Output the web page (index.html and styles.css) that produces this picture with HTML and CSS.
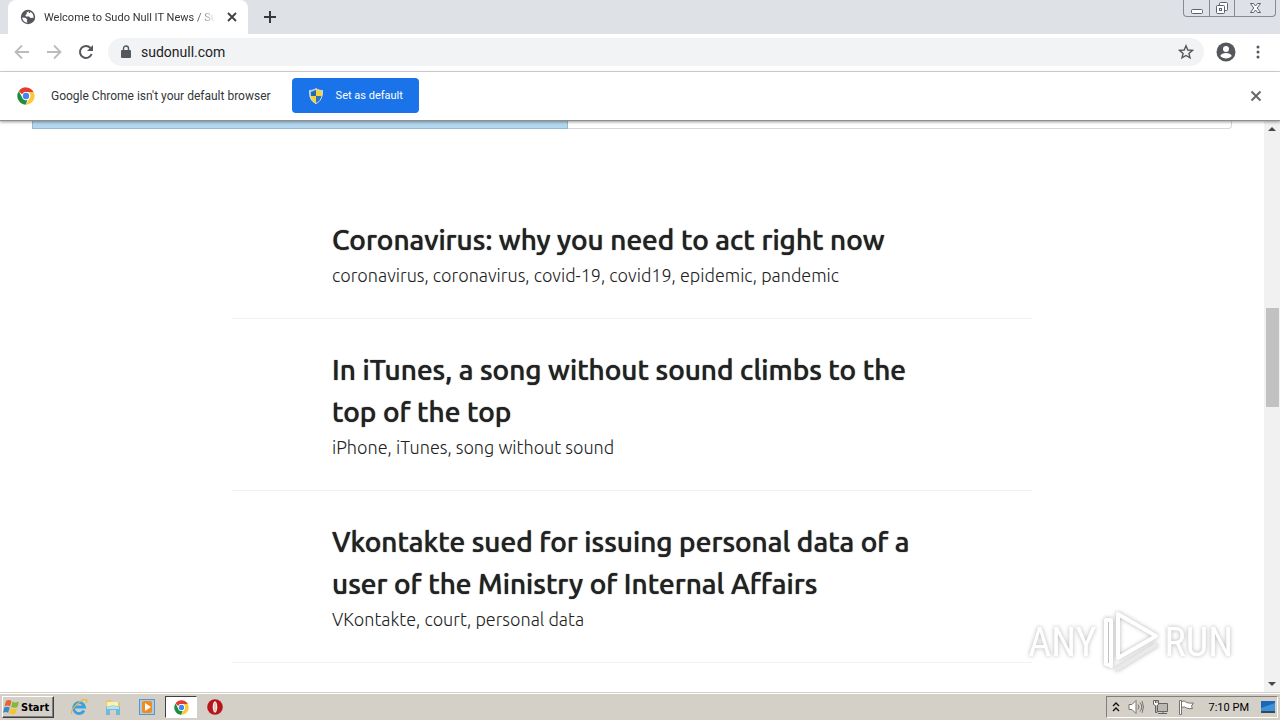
FILE: index.html
```html
<!DOCTYPE html>
<html lang="en">
<head>
    <meta charset="UTF-8">
    <meta name="viewport" content="width=device-width, initial-scale=1.0">
    <title>Welcome to Sudo Null IT News</title>
    <link rel="stylesheet" href="styles.css">
</head>
<body>
    <!-- Chrome logo, shared by the info bar and the taskbar -->
    <svg class="defs" width="0" height="0" aria-hidden="true">
        <symbol id="chrome" viewBox="0 0 48 48">
            <path fill="#e33b2e" d="M24 1a23 23 0 0 1 20 12H24a11 11 0 0 0-10 7L5 11A23 23 0 0 1 24 1z"/>
            <path fill="#fcc934" d="M44 13a23 23 0 0 1-21 34l11-18a11 11 0 0 0-2-14l-2-2z"/>
            <path fill="#1e8e3e" d="M5 11l9.500 18.500A11 11 0 0 0 28 34l-5 13A23 23 0 0 1 5 11z"/>
            <circle cx="24" cy="24" r="11" fill="#fff"/>
            <circle cx="24" cy="24" r="8.500" fill="#4285f4"/>
        </symbol>
    </svg>

    <header class="tab-strip">
        <div class="tab">
            <svg width="16" height="16" viewBox="0 0 16 16">
                <circle cx="8" cy="8" r="7.200" fill="#54575b"/>
                <path fill="#fff" d="M2.200 8.500l3 .2 2 1.600-.4 1.600.9 1.800C4.500 13.500 2.300 11 2.200 8.500zM8.500 2.300l-2 1.400.4 1.400-1.600 1 .7 1.300h3l1.600 1.600 3-.2c.3-3-1.600-5.500-4-6.300l.6 1.300-1.300.4z"/>
            </svg>
            <span class="tab-title">Welcome to Sudo Null IT News / Sud</span>
            <button class="icon-btn" aria-label="Close tab">
                <svg width="16" height="16" viewBox="0 0 16 16"><path d="M4 4l8 8M12 4l-8 8" stroke="#3c4043" stroke-width="1.800"/></svg>
            </button>
        </div>
        <button class="icon-btn new-tab" aria-label="New tab">
            <svg width="14" height="14" viewBox="0 0 14 14"><path d="M7 1v12M1 7h12" stroke="#35383c" stroke-width="2"/></svg>
        </button>
        <div class="window-controls">
            <button aria-label="Minimize"><svg width="12" height="14" viewBox="0 0 12 14"><rect x=".5" y="8.500" width="11" height="4" rx="1" fill="#fff" stroke="#5c6270"/></svg></button>
            <button aria-label="Restore"><svg width="14" height="14" viewBox="0 0 14 14" fill="#fff" stroke="#5c6270"><rect x="4.500" y="1.500" width="8" height="8" rx="1"/><rect x="1.500" y="4.500" width="8" height="8" rx="1"/><rect x="4.500" y="7.500" width="2" height="2"/></svg></button>
            <button class="close" aria-label="Close"><svg width="13" height="14" viewBox="0 0 13 14"><path d="M1.500 2.500h3l2 2.500 2-2.500h3L8.200 7l3.300 4.500h-3l-2-2.500-2 2.500h-3L4.800 7z" fill="#fff" stroke="#5c6270"/></svg></button>
        </div>
    </header>

    <nav class="toolbar">
        <button class="icon-btn" aria-label="Back"><svg width="16" height="16" viewBox="0 0 16 16"><path d="M15 8H2M8 1.500L1.500 8 8 14.500" fill="none" stroke="#b9bcbf" stroke-width="1.800"/></svg></button>
        <button class="icon-btn" aria-label="Forward"><svg width="16" height="16" viewBox="0 0 16 16"><path d="M1 8h13M8 1.500L14.500 8 8 14.500" fill="none" stroke="#b9bcbf" stroke-width="1.800"/></svg></button>
        <button class="icon-btn" aria-label="Reload"><svg width="16" height="16" viewBox="0 0 16 16"><path d="M13.600 10A6 6 0 1 1 12.500 4" fill="none" stroke="#54575b" stroke-width="2"/><path d="M15 1v6H9z" fill="#54575b"/></svg></button>
        <div class="address">
            <svg width="10" height="14" viewBox="0 0 10 14"><rect y="5" width="10" height="8" rx="1" fill="#54575b"/><path d="M2.500 6V3.500a2.500 2.500 0 0 1 5 0V6" fill="none" stroke="#54575b" stroke-width="1.400"/></svg>
            <input type="text" value="sudonull.com" aria-label="Address">
            <button class="icon-btn" aria-label="Bookmark this page"><svg width="16" height="16" viewBox="0 0 16 16"><path d="M8 1.800l1.800 4.200 4.600.4-3.500 3 1.100 4.500L8 11.500l-4 2.400 1.100-4.500-3.500-3L6.200 6z" fill="none" stroke="#54575b" stroke-width="1.400"/></svg></button>
        </div>
        <button class="icon-btn" aria-label="Profile"><svg width="20" height="20" viewBox="0 0 20 20"><circle cx="10" cy="10" r="9.500" fill="#54575b"/><circle cx="10" cy="7" r="3" fill="#fff"/><path d="M4.200 14c1.300-4 10.300-4 11.600 0-3 3.300-8.600 3.300-11.600 0z" fill="#fff"/></svg></button>
        <button class="icon-btn menu" aria-label="Menu"><svg width="4" height="16" viewBox="0 0 4 16" fill="#54575b"><circle cx="2" cy="3" r="1.500"/><circle cx="2" cy="8" r="1.500"/><circle cx="2" cy="13" r="1.500"/></svg></button>
    </nav>

    <div class="infobar">
        <svg width="18" height="18"><use href="#chrome"/></svg>
        <span>Google Chrome isn't your default browser</span>
        <button class="set-default">
            <svg width="16" height="16" viewBox="0 0 16 16">
                <path d="M8 .5C6 2 4 2.500 1.500 2.500 1.300 9 3.500 13.500 8 15.500z" fill="#8ccbf2"/>
                <path d="M8 .5c2 1.500 4 2 6.500 2C14.700 9 12.500 13.500 8 15.500z" fill="#f5d33c"/>
                <path d="M1.500 8H8v7.500C4 13.500 2 11 1.500 8z" fill="#f5d33c"/>
                <path d="M14.500 8H8v7.500c4-2 6-4.500 6.500-7.500z" fill="#2f74c4"/>
                <path d="M8 2v6H3V4z" fill="#2868ae"/>
                <path d="M8 .5c2 1.500 4 2 6.500 2C14.700 9 12.500 13.500 8 15.500 3.500 13.500 1.300 9 1.500 2.500 4 2.500 6 2 8 .5z" fill="none" stroke="#d5dfe6"/>
            </svg>
            Set as default
        </button>
        <button class="icon-btn dismiss" aria-label="Dismiss"><svg width="16" height="16" viewBox="0 0 16 16"><path d="M3.500 3.500l9 9M12.500 3.500l-9 9" stroke="#66696d" stroke-width="2"/></svg></button>
    </div>

    <div class="viewport">
        <main class="page">
            <div class="banner"><div class="banner-fill"></div></div>
            <article>
                <h2><a href="#">Coronavirus: why you need to act right now</a></h2>
                <p>coronavirus, coronavirus, covid-19, covid19, epidemic, pandemic</p>
            </article>
            <article>
                <h2><a href="#">In iTunes, a song without sound climbs to the top of the top</a></h2>
                <p>iPhone, iTunes, song without sound</p>
            </article>
            <article>
                <h2><a href="#">Vkontakte sued for issuing personal data of a user of the Ministry of Internal Affairs</a></h2>
                <p>VKontakte, court, personal data</p>
            </article>
        </main>
        <div class="scrollbar">
            <svg width="16" height="16" viewBox="0 0 16 16"><path d="M4 10l4-4 4 4z" fill="#484848"/></svg>
            <div class="track"><div class="thumb"></div></div>
            <svg width="16" height="16" viewBox="0 0 16 16"><path d="M4 6l4 4 4-4z" fill="#484848"/></svg>
        </div>
        <div class="watermark">
            <span>ANY</span>
            <svg width="60" height="64" viewBox="0 0 60 64" fill="none" stroke="#fff" stroke-width="4" stroke-linejoin="round" stroke-linecap="round">
                <path d="M17 4v42M17 4l38 22-38 22"/>
                <path d="M10 10H5v44l5 2V10"/>
                <path d="M16 59l39-24" stroke="#e9e9e9"/>
            </svg>
            <span>RUN</span>
        </div>
    </div>

    <footer class="taskbar">
        <button class="start">
            <svg width="17" height="16" viewBox="0 0 17 16">
                <path d="M3 2c2-1.300 4-1.200 5.500 0L7 7.500C5.500 6.300 3.500 6.300 1.500 7.300z" fill="#e8622c"/>
                <path d="M9.500 2.500C11 3.700 13 3.800 16 2.500L14.500 8c-2 1-4.500 1-6.300 0z" fill="#82b93c"/>
                <path d="M1.200 8.500c2-1 4-1 5.500 0L5.200 14C3.800 12.800 2 12.800 0 13.800z" fill="#3f86c8"/>
                <path d="M7.800 9c1.700 1.200 4 1.200 6.300.3L12.500 14.500c-2 1-4.500 1-6.200 0z" fill="#f6c42f"/>
            </svg>
            Start
        </button>
        <button class="task" aria-label="Internet Explorer"><svg width="18" height="18" viewBox="0 0 18 18" fill="none"><path d="M14 12.500A5.500 5.500 0 1 1 14.500 9H5" stroke="#3ba0df" stroke-width="2.800"/><path d="M2 16C-1 12 13-1 16.500 2c.8.800.3 2-.5 3" stroke="#e6b93d" stroke-width="1.200"/></svg></button>
        <button class="task" aria-label="Explorer"><svg width="18" height="18" viewBox="0 0 18 18"><path d="M2 2h5l1 2h8v8H2z" fill="#e8c765"/><path d="M3 4h11v6H3z" fill="#fbf0b5"/><path d="M2 9q7-3 14 0v8h-4v-5H6v5H2z" fill="#72b8da"/><path d="M3 9q6-2 12 0v2H3z" fill="#b9e1ee"/></svg></button>
        <button class="task" aria-label="Media Player"><svg width="18" height="18" viewBox="0 0 18 18"><rect x="1.500" y="1.500" width="15" height="15" fill="#a8cdea" stroke="#5a95c5"/><rect x="4" y="3" width="10" height="12" rx="2" fill="#f28a1c"/><path d="M7 5l6 4-6 4z" fill="#fff"/></svg></button>
        <button class="task active" aria-label="Google Chrome"><svg width="15" height="15"><use href="#chrome"/></svg></button>
        <button class="task" aria-label="Opera"><svg width="16" height="16" viewBox="0 0 16 16"><circle cx="8" cy="8" r="7.800" fill="#b5161b"/><ellipse cx="8" cy="8" rx="2.300" ry="5.800" fill="#f8e9e6"/><path d="M8 4v8" stroke="#d9a5a3"/></svg></button>
        <div class="tray">
            <svg width="8" height="12" viewBox="0 0 8 12" fill="none" stroke="#111" stroke-width="1.400"><path d="M1 5l3-3 3 3M1 10l3-3 3 3"/></svg>
            <svg width="16" height="16" viewBox="0 0 16 16" fill="#fff" stroke="#77746d"><path d="M1 5.500h3l4-4v13l-4-4H1z"/><path d="M10 5.500q2 2.500 0 5M12 3.500q3.500 4.500 0 9M14 2q3 6 0 12" fill="none"/></svg>
            <svg width="18" height="16" viewBox="0 0 18 16" fill="#fff" stroke="#66635d"><path d="M5.500 4.500h10v8h-10z" fill="#bab8b3"/><path d="M6 14.500h9M11 12v3"/><path d="M1.500 1.500h5v4l-1.500 1v7H3.500v-7l-2-1zM3.500 1v3M5 1v3"/></svg>
            <svg width="17" height="16" viewBox="0 0 17 16" fill="#fff" stroke="#77746d"><path d="M1.500 15.500v-14h2v14zM3.500 2.500q3-1.500 5 1 3 1 7 .5l-2 3 1 2.500q-4 .5-6-.5-2-2-5-.5z"/></svg>
            <time>7:10 PM</time>
            <svg width="16" height="14" viewBox="0 0 16 14"><path d="M1 1h14v10H1z" fill="#1967b8"/><path d="M1 8l14-5v8H1z" fill="#3f92d8"/><path d="M1 11h14v2H1z" fill="#35495c"/></svg>
        </div>
    </footer>
</body>
</html>
```
FILE: styles.css
```css
* {
    box-sizing: border-box;
}

body {
    margin: 0;
    height: 100vh;
    display: flex;
    flex-direction: column;
    overflow: hidden;
    background: #fff;
    color: #333639;
    font-family: Tahoma, Roboto, "Noto Sans", sans-serif;
    font-size: 12px;
}

svg {
    display: block;
    flex: none;
}

.defs {
    position: absolute;
}

button {
    font: inherit;
    color: inherit;
    padding: 0;
    border: 0;
    background: none;
}

.icon-btn {
    display: flex;
    flex: none;
}

/* Tab strip */
.tab-strip {
    display: flex;
    flex: none;
    height: 34px;
    padding: 0 4px 0 8px;
    background: #dee1e6;
}

.tab {
    display: flex;
    align-items: center;
    gap: 8px;
    width: 240px;
    padding: 0 8px 0 12px;
    border-radius: 8px 8px 0 0;
    background: #fff;
}

.tab-title {
    flex: 1;
    min-width: 0;
    white-space: nowrap;
    font-size: 11px;
    mask-image: linear-gradient(to right, #000 88%, transparent);
    mask-clip: no-clip;
}

.new-tab {
    align-items: center;
    margin-left: 15px;
}

.window-controls {
    display: flex;
    height: 17px;
    margin-left: auto;
    border: 1px solid #858a96;
    border-top: 0;
    border-radius: 0 0 4px 4px;
}

.window-controls button {
    display: flex;
    align-items: center;
    justify-content: center;
    width: 25px;
}

.window-controls button + button {
    border-left: 1px solid #858a96;
}

.window-controls .close {
    width: 41px;
}

/* Toolbar */
.toolbar {
    display: flex;
    flex: none;
    align-items: center;
    gap: 16px;
    height: 38px;
    padding: 0 20px 1px 14px;
    border-bottom: 1px solid #d5d7da;
}

.menu {
    margin-left: 4px;
}

.address {
    display: flex;
    flex: 1;
    align-items: center;
    gap: 10px;
    height: 28px;
    margin-left: -2px;
    margin-right: -4px;
    padding: 0 10px 0 13px;
    border-radius: 14px;
    background: #f1f3f4;
}

.address input {
    flex: 1;
    min-width: 0;
    padding: 0;
    border: 0;
    outline: 0;
    background: none;
    color: #202124;
    font-family: inherit;
    font-size: 14px;
}

/* Default browser prompt */
.infobar {
    position: relative;
    z-index: 1;
    display: flex;
    flex: none;
    align-items: center;
    height: 49px;
    padding: 0 16px 1px 17px;
    background: #fff;
    border-bottom: 1px solid #8d8f91;
    box-shadow: 0 1px 3px rgba(0, 0, 0, 0.4);
}

.infobar span {
    margin: 0 21px 0 16px;
}

.set-default {
    display: flex;
    align-items: center;
    gap: 12px;
    height: 35px;
    padding: 0 16px;
    border-radius: 4px;
    background: #1a73e8;
    color: #fff;
    font-size: 11px;
}

.dismiss {
    margin-left: auto;
}

/* Page */
.viewport {
    position: relative;
    display: flex;
    flex: 1;
    min-height: 0;
}

.page {
    flex: 1;
    overflow: hidden;
    color: #222;
    font-family: Ubuntu, "Noto Sans", "Open Sans", sans-serif;
}

.banner {
    height: 8px;
    margin: 0 32px 60px;
    border: 1px solid #d5d8da;
    border-top: 0;
    border-radius: 0 0 4px 4px;
}

.banner-fill {
    width: 44.7%;
    height: 8px;
    border: 1px solid #97b9cf;
    border-top: 0;
    margin-left: -1px;
    background: #b3d7ee;
}

article {
    max-width: 800px;
    margin: 0 auto;
    padding: 30px 100px 28px;
    border-bottom: 1px solid #f2f2f2;
}

h2 {
    margin: 0;
    font-size: 28px;
    font-weight: 500;
    line-height: 42px;
    text-shadow: 0 0 1px #222;
}

h2 a {
    color: inherit;
    text-decoration: none;
}

article p {
    margin: 0;
    font-size: 18px;
    font-weight: 300;
    line-height: 29px;
}

.scrollbar {
    display: flex;
    flex-direction: column;
    width: 16px;
    background: #f1f1f1;
}

.track {
    flex: 1;
}

.thumb {
    height: 99px;
    margin: 171px 1px 0 2px;
    background: #c1c1c1;
}

.watermark {
    position: absolute;
    right: 47px;
    bottom: 18px;
    display: flex;
    align-items: center;
    gap: 4px;
    color: #fff;
    font-family: "Ubuntu Condensed", "Roboto Condensed", "Liberation Sans Narrow", "Liberation Sans", sans-serif;
    font-size: 40px;
    filter: drop-shadow(0 0 2px rgba(0, 0, 0, 0.3));
}

/* Taskbar */
.taskbar {
    display: flex;
    flex: none;
    align-items: center;
    height: 28px;
    padding: 1px 0 0 2px;
    border-top: 1px solid #d4d0c8;
    background: #d4d0c8;
    box-shadow: inset 0 1px 0 #fff;
    color: #000;
    font-size: 11px;
}

.start {
    display: flex;
    align-items: center;
    gap: 1px;
    width: 52px;
    height: 22px;
    margin-right: 9px;
    border: 1px solid;
    border-color: #fff #404040 #404040 #fff;
    box-shadow: inset -1px -1px 0 #808080;
    font-family: "DejaVu Sans Condensed", "DejaVu Sans", sans-serif;
    font-weight: bold;
}

.task {
    display: flex;
    align-items: center;
    justify-content: center;
    width: 32px;
    height: 22px;
    margin-right: 2px;
}

.active {
    border: 1px solid;
    border-color: #404040 #fff #fff #404040;
    background: #fff;
}

.tray {
    display: flex;
    align-items: center;
    gap: 8px;
    height: 22px;
    margin-left: auto;
    margin-right: 2px;
    padding: 0 1px 0 5px;
    border: 1px solid;
    border-color: #808080 #fff #fff #808080;
}

.tray time {
    margin: 0 3px 0 6px;
}
```
